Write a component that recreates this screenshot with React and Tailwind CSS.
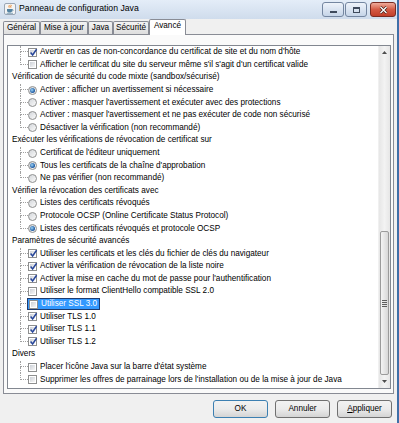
import React from 'react';

const GROUPS = [
  {
    title: null,
    type: 'check',
    items: [
      { label: "Avertir en cas de non-concordance du certificat de site et du nom d'hôte", on: true },
      { label: "Afficher le certificat du site du serveur même s'il s'agit d'un certificat valide" },
    ],
  },
  {
    title: 'Vérification de sécurité du code mixte (sandbox/sécurisé)',
    type: 'radio',
    items: [
      { label: 'Activer : afficher un avertissement si nécessaire', on: true },
      { label: "Activer : masquer l'avertissement et exécuter avec des protections" },
      { label: "Activer : masquer l'avertissement et ne pas exécuter de code non sécurisé" },
      { label: 'Désactiver la vérification (non recommandé)' },
    ],
  },
  {
    title: 'Exécuter les vérifications de révocation de certificat sur',
    type: 'radio',
    items: [
      { label: "Certificat de l'éditeur uniquement" },
      { label: "Tous les certificats de la chaîne d'approbation", on: true },
      { label: 'Ne pas vérifier (non recommandé)' },
    ],
  },
  {
    title: 'Vérifier la révocation des certificats avec',
    type: 'radio',
    items: [
      { label: 'Listes des certificats révoqués' },
      { label: 'Protocole OCSP (Online Certificate Status Protocol)' },
      { label: 'Listes des certificats révoqués et protocole OCSP', on: true },
    ],
  },
  {
    title: 'Paramètres de sécurité avancés',
    type: 'check',
    items: [
      { label: 'Utiliser les certificats et les clés du fichier de clés du navigateur', on: true },
      { label: 'Activer la vérification de révocation de la liste noire', on: true },
      { label: "Activer la mise en cache du mot de passe pour l'authentification", on: true },
      { label: 'Utiliser le format ClientHello compatible SSL 2.0' },
      { label: 'Utiliser SSL 3.0', selected: true },
      { label: 'Utiliser TLS 1.0', on: true },
      { label: 'Utiliser TLS 1.1', on: true },
      { label: 'Utiliser TLS 1.2', on: true },
    ],
  },
  {
    title: 'Divers',
    type: 'check',
    items: [
      { label: "Placer l'icône Java sur la barre d'état système" },
      { label: "Supprimer les offres de parrainage lors de l'installation ou de la mise à jour de Java" },
    ],
  },
];

const TABS = [
  { label: 'Général', w: 'w-[37px]' },
  { label: 'Mise à jour', w: 'w-[48px]' },
  { label: 'Java', w: 'w-[25px]' },
  { label: 'Sécurité', w: 'w-[36px]' },
  { label: 'Avancé', w: 'w-[37px]', active: true },
];

function JavaIcon() {
  return (
    <svg width="12" height="12" viewBox="0 0 12 12">
      <rect x="0.5" y="0.5" width="11" height="11" rx="1.5" fill="#f4f4f4" stroke="#9aa6b5" />
      <path d="M5 2.2c1 .8-.8 1.4.2 2.4M6.8 1.8c1.1 1-.9 1.6.1 2.8" stroke="#e76f00" strokeWidth="0.9" fill="none" />
      <path d="M3 6h5.2v1.6c0 1.4-1.2 2-2.6 2S3 9 3 7.6z" fill="#5382a1" />
      <path d="M8.2 6.4c1.3 0 1.3 1.6 0 1.6" stroke="#5382a1" strokeWidth="0.8" fill="none" />
      <path d="M2.6 10.3h6.4" stroke="#5382a1" strokeWidth="0.7" />
    </svg>
  );
}

function Branch({ last }) {
  return (
    <div className="w-[8px] h-full flex flex-col shrink-0">
      <div className="h-1/2 border-l border-b border-dotted border-[#a0a0a0]" />
      <div className={last ? 'h-1/2' : 'h-1/2 border-l border-dotted border-[#a0a0a0]'} />
    </div>
  );
}

function Check({ on }) {
  return (
    <span className="relative w-[9px] h-[9px] border border-[#8e8f8f] bg-white p-px shrink-0">
      <span className="block w-full h-full bg-gradient-to-br from-[#cdd1d7] to-[#f7f7f7]" />
      {on && (
        <svg className="absolute left-[0px] top-[-1px]" width="9" height="9" viewBox="0 0 9 9">
          <path d="M1.6 4.6 L3.6 7 L7.6 1.2" stroke="#27469a" strokeWidth="1.5" fill="none" />
        </svg>
      )}
    </span>
  );
}

function Radio({ on }) {
  return (
    <span className="w-[9px] h-[9px] rounded-full border border-[#8e8f8f] bg-gradient-to-br from-[#d3d6da] to-[#fbfbfb] flex items-center justify-center shrink-0">
      {on && (
        <span className="w-[5px] h-[5px] rounded-full bg-[radial-gradient(circle_at_40%_40%,#9fd6f7,#1d5aa3_65%,#163f78)]" />
      )}
    </span>
  );
}

function OptionRow({ item, type, last }) {
  return (
    <div className="h-[12.6px] flex items-center pl-[12px]">
      <Branch last={last} />
      {item.selected ? (
        <div className="flex items-center h-[12px] -ml-px pl-px pr-[2px] border border-[#1e3b6e] bg-[#3399ff] text-white">
          <Check on={item.on} />
          <span className="ml-[3px] whitespace-nowrap">{item.label}</span>
        </div>
      ) : (
        <>
          {type === 'radio' ? <Radio on={item.on} /> : <Check on={item.on} />}
          <span className="ml-[3px] whitespace-nowrap">{item.label}</span>
        </>
      )}
    </div>
  );
}

function WinButton({ children, primary }) {
  return (
    <button
      className={`w-[55px] h-[18px] rounded-[3px] border ${primary ? 'border-[#3c7fb1]' : 'border-[#707070]'} bg-gradient-to-b from-[#f2f2f2] via-[#ebebeb] to-[#d4d4d4] text-[8.2px] leading-none text-black`}
    >
      {children}
    </button>
  );
}

export default function App() {
  return (
    <div className="w-[399px] h-[423px] overflow-hidden bg-[#f0f0f0] border-r-2 border-[#3f6fa8] font-['Liberation_Sans',Arial,sans-serif] text-black flex flex-col">
      {/* Title bar */}
      <div className="h-[19px] shrink-0 flex items-start bg-gradient-to-b from-[#e4edf8] to-[#cfdcec] pl-[4px] pr-[1px]">
        <div className="mt-[3px]">
          <JavaIcon />
        </div>
        <span className="ml-[3px] mt-[4px] text-[8.7px] leading-none">Panneau de configuration Java</span>
        <div className="ml-auto mt-[2px] flex items-center gap-px">
          <div className="w-[22px] h-[15px] rounded-[3px] border border-[#7486a0] bg-gradient-to-b from-[#eef3fa] to-[#c6d5e8] flex items-center justify-center">
            <span className="block w-[7px] h-[2px] mt-[4px] bg-[#3e4a5c]" />
          </div>
          <div className="w-[22px] h-[15px] rounded-[3px] border border-[#7486a0] bg-gradient-to-b from-[#eef3fa] to-[#c6d5e8] flex items-center justify-center">
            <span className="block w-[7px] h-[6px] border border-[#3e4a5c] border-t-2" />
          </div>
          <div className="ml-[2px] w-[26px] h-[15px] rounded-[3px] border border-[#7a2b22] bg-gradient-to-b from-[#eeaa9b] via-[#d45a45] to-[#c23f2a] flex items-center justify-center">
            <svg width="9" height="8" viewBox="0 0 9 8">
              <path d="M1.5 1 L7.5 7 M7.5 1 L1.5 7" stroke="#3b1a16" strokeWidth="2.6" />
              <path d="M1.5 1 L7.5 7 M7.5 1 L1.5 7" stroke="#ffffff" strokeWidth="1.4" />
            </svg>
          </div>
        </div>
      </div>

      {/* Tabs */}
      <div className="h-[15px] shrink-0 flex items-end pl-[3px] text-[8.2px] leading-none">
        {TABS.map((t) =>
          t.active ? (
            <div
              key={t.label}
              className={`${t.w} h-[16px] -mb-px relative z-10 border border-b-0 border-[#898c95] bg-white flex items-center justify-center pb-[2px] rounded-t-[2px]`}
            >
              {t.label}
            </div>
          ) : (
            <div
              key={t.label}
              className={`${t.w} h-[13px] border border-b-0 border-[#898c95] bg-gradient-to-b from-[#f3f3f3] to-[#dedede] flex items-center justify-center rounded-t-[2px]`}
            >
              {t.label}
            </div>
          )
        )}
      </div>

      {/* Tab panel */}
      <div className="ml-[3px] w-[391px] h-[360px] shrink-0 border border-[#898c95] bg-[#fafafa] pt-[10px] pl-[3px] pr-[2px] pb-[4px]">
        <div className="h-full border border-[#828790] flex bg-white">
          <div className="flex-1 overflow-hidden text-[8.2px] leading-none">
            {GROUPS.map((g, gi) => (
              <div key={gi}>
                {g.title && (
                  <div className="h-[12.6px] flex items-center pl-[4px] whitespace-nowrap">{g.title}</div>
                )}
                {g.items.map((item, i) => (
                  <OptionRow key={i} item={item} type={g.type} last={i === g.items.length - 1} />
                ))}
              </div>
            ))}
          </div>

          {/* Scrollbar */}
          <div className="w-[12px] shrink-0 flex flex-col bg-gradient-to-r from-[#e6e6e6] via-[#f3f3f3] to-[#e6e6e6] border-l border-[#f0f0f0]">
            <div className="h-[12px] flex items-center justify-center">
              <svg width="5" height="3" viewBox="0 0 5 3">
                <path d="M0 3 L2.5 0 L5 3 Z" fill="#4d4d4d" />
              </svg>
            </div>
            <div className="flex-1 flex flex-col justify-end">
              <div className="h-[144px] mx-px rounded-[2px] border border-[#9b9b9b] bg-gradient-to-r from-[#f4f4f4] to-[#d8d8d8] flex items-center justify-center">
                <div className="flex flex-col gap-px">
                  <span className="block w-[5px] h-px bg-[#5e5e5e]" />
                  <span className="block w-[5px] h-px bg-[#5e5e5e]" />
                  <span className="block w-[5px] h-px bg-[#5e5e5e]" />
                  <span className="block w-[5px] h-px bg-[#5e5e5e]" />
                </div>
              </div>
            </div>
            <div className="h-[13px] flex items-center justify-center">
              <svg width="5" height="3" viewBox="0 0 5 3">
                <path d="M0 0 L2.5 3 L5 0 Z" fill="#4d4d4d" />
              </svg>
            </div>
          </div>
        </div>
      </div>

      {/* Buttons */}
      <div className="flex justify-end gap-[7px] pr-[5px] pt-[6px]">
        <WinButton primary>OK</WinButton>
        <WinButton>Annuler</WinButton>
        <WinButton>
          <span className="underline">A</span>ppliquer
        </WinButton>
      </div>
    </div>
  );
}
